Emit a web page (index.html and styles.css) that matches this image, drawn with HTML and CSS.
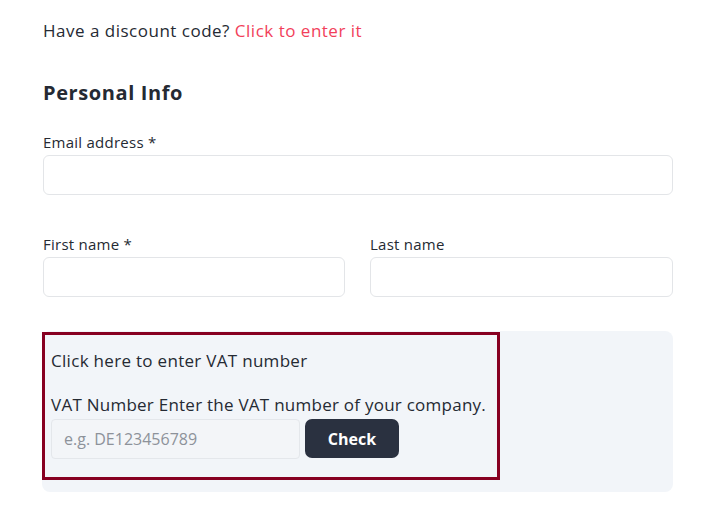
FILE: index.html
```html
<!DOCTYPE html>
<html lang="en">
<head>
<meta charset="utf-8">
<link rel="stylesheet" href="styles.css">
</head>
<body>
<div class="page">
  <p class="discount">Have a discount code? <a class="link" href="#">Click to enter it</a></p>
  <h2 class="section-title">Personal Info</h2>
  <div class="field">
    <label class="label">Email address *</label>
    <div class="input"></div>
  </div>
  <div class="row">
    <div class="field">
      <label class="label">First name *</label>
      <div class="input"></div>
    </div>
    <div class="field">
      <label class="label">Last name</label>
      <div class="input"></div>
    </div>
  </div>
  <div class="vat-panel">
    <div class="vat-box">
      <p class="vat-toggle">Click here to enter VAT number</p>
      <p class="vat-label">VAT Number Enter the VAT number of your company.</p>
      <div class="vat-row">
        <div class="vat-input">e.g. DE123456789</div>
        <button class="check">Check</button>
      </div>
    </div>
  </div>
</div>
</body>
</html>
```
FILE: styles.css
```css
* { box-sizing: border-box; }
body {
  margin: 0;
  background: #ffffff;
  font-family: "Open Sans", "DejaVu Sans", sans-serif;
  color: #252a33;
}
.page {
  width: 631px;
  margin-left: 42px;
  padding-top: 19px;
}
.discount {
  margin: 0 0 0 1px;
  font-size: 17px;
  line-height: 24px;
  letter-spacing: 0.5px;
}
.link {
  color: #f23f5b;
  text-decoration: none;
}
.section-title {
  margin: 36px 0 0 1px;
  font-size: 20px;
  line-height: 28px;
  font-weight: 700;
  letter-spacing: 0.6px;
}
.field {
  display: flex;
  flex-direction: column;
  gap: 3px;
  margin-top: 25px;
  margin-left: 1px;
}
.label {
  font-size: 15px;
  line-height: 20px;
  letter-spacing: 0.25px;
}
.input {
  height: 40px;
  border: 1px solid #e3e5e8;
  border-radius: 6px;
  background: #fff;
}
.row {
  display: grid;
  grid-template-columns: 302px 303px;
  column-gap: 25px;
  margin-top: 14px;
  margin-left: 1px;
}
.row .field { margin-left: 0; }
.vat-panel {
  margin-top: 34px;
  background: #f2f5f9;
  border-radius: 8px;
  padding: 1px 0 12px 0;
}
.vat-box {
  width: 458px;
  border: 3px solid #870021;
  padding: 14px 6px 18px 6px;
}
.vat-toggle, .vat-label {
  margin: 0;
  font-size: 17px;
  line-height: 24px;
  letter-spacing: 0.3px;
}
.vat-label { margin-top: 20px; letter-spacing: 0.25px; }
.vat-row {
  display: flex;
  gap: 5px;
  margin-top: 2px;
}
.vat-input {
  width: 249px;
  height: 40px;
  border: 1px solid #e4e7eb;
  border-radius: 4px;
  background: #f3f5f8;
  color: #8d929a;
  font-size: 16px;
  line-height: 38px;
  padding-left: 12px;
}
.check {
  width: 94px;
  height: 39px;
  border: none;
  border-radius: 7px;
  background: #2a3140;
  color: #fff;
  font-family: inherit;
  font-size: 16px;
  font-weight: 700;
}
```
